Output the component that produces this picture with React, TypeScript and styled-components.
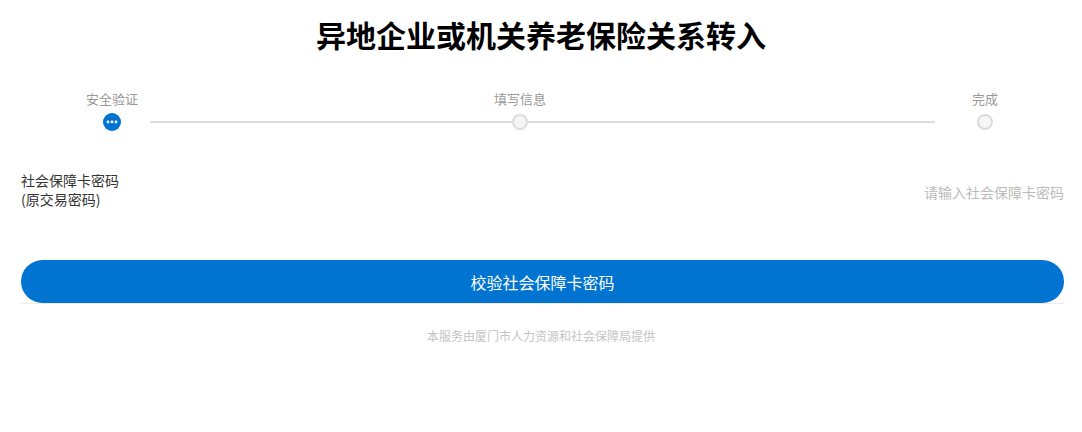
import React from "react";
import styled, { createGlobalStyle } from "styled-components";

const Global = createGlobalStyle`
  html, body { margin: 0; padding: 0; background: #fff; }
  body { font-family: "Noto Sans CJK SC", "Noto Sans", sans-serif; color: #333; }
  * { box-sizing: border-box; }
`;

const Page = styled.div`
  width: 1082px;
  display: flex;
  flex-direction: column;
`;

const Title = styled.h1`
  margin: 0;
  height: 72px;
  line-height: 68px;
  text-align: center;
  font-size: 30px;
  font-weight: 700;
  color: #000;
`;

const StepsRow = styled.div`
  display: flex;
  margin: 18px 89px 0 103px;
  height: 41px;
`;

const Step = styled.div<{ $w: number }>`
  width: ${(p) => p.$w}px;
  flex-shrink: 0;
  display: flex;
  flex-direction: column;
  align-items: center;
  gap: 5px;
`;

const StepLabel = styled.div`
  font-size: 13px;
  line-height: 18px;
  color: #999;
  white-space: nowrap;
`;

const CircleSlot = styled.div`
  height: 18px;
  display: flex;
  align-items: center;
  justify-content: center;
`;

const ActiveCircle = styled.div`
  width: 18px;
  height: 18px;
  border-radius: 50%;
  background: #0073d1;
  display: flex;
  align-items: center;
  justify-content: center;
`;

const IdleCircle = styled.div`
  width: 16px;
  height: 16px;
  border-radius: 50%;
  background: #f6f6f6;
  border: 2px solid #dcdcdc;
`;

const Connector = styled.div<{ $grow: number; $ml?: number; $mr?: number }>`
  flex: ${(p) => p.$grow} 1 0;
  align-self: flex-end;
  height: 2px;
  margin: 0 ${(p) => p.$mr ?? 0}px 8px ${(p) => p.$ml ?? 0}px;
  background: #dcdcdc;
`;

const FormRow = styled.div`
  display: flex;
  align-items: center;
  justify-content: space-between;
  margin: 39px 18px 0 21px;
  height: 40px;
`;

const FieldLabel = styled.label`
  font-size: 14px;
  line-height: 19px;
  color: #333;
`;

const Input = styled.input`
  border: none;
  outline: none;
  background: transparent;
  text-align: right;
  font-family: inherit;
  font-size: 14px;
  width: 300px;
  padding: 0;
  margin-top: 4px;
  color: #333;
  &::placeholder { color: #bbb; }
`;

const ButtonWrap = styled.div`
  margin: 50px 18px 0 21px;
  border-bottom: 1px solid #ececec;
`;

const Button = styled.button`
  display: block;
  width: 100%;
  height: 43px;
  border: none;
  border-radius: 22px;
  background: #0074d0;
  color: #fff;
  font-family: inherit;
  font-size: 16px;
  cursor: pointer;
`;

const Footer = styled.div`
  margin-top: 23px;
  text-align: center;
  font-size: 12px;
  line-height: 18px;
  color: #c4c4c4;
`;

export default function App() {
  return (
    <Page>
      <Global />
      <Title>异地企业或机关养老保险关系转入</Title>
      <StepsRow>
        <Step $w={18}>
          <StepLabel>安全验证</StepLabel>
          <CircleSlot>
            <ActiveCircle>
              <svg width="12" height="4" viewBox="0 0 12 4">
                <circle cx="2" cy="2" r="1.4" fill="#fff" />
                <circle cx="6" cy="2" r="1.4" fill="#fff" />
                <circle cx="10" cy="2" r="1.4" fill="#fff" />
              </svg>
            </ActiveCircle>
          </CircleSlot>
        </Step>
        <Connector $grow={362} $ml={29} />
        <Step $w={16}>
          <StepLabel>填写信息</StepLabel>
          <CircleSlot>
            <IdleCircle />
          </CircleSlot>
        </Step>
        <Connector $grow={407} $mr={42} />
        <Step $w={16}>
          <StepLabel>完成</StepLabel>
          <CircleSlot>
            <IdleCircle />
          </CircleSlot>
        </Step>
      </StepsRow>
      <FormRow>
        <FieldLabel htmlFor="pwd">
          社会保障卡密码
          <br />
          (原交易密码)
        </FieldLabel>
        <Input id="pwd" type="password" placeholder="请输入社会保障卡密码" />
      </FormRow>
      <ButtonWrap>
        <Button>校验社会保障卡密码</Button>
      </ButtonWrap>
      <Footer>本服务由厦门市人力资源和社会保障局提供</Footer>
    </Page>
  );
}
